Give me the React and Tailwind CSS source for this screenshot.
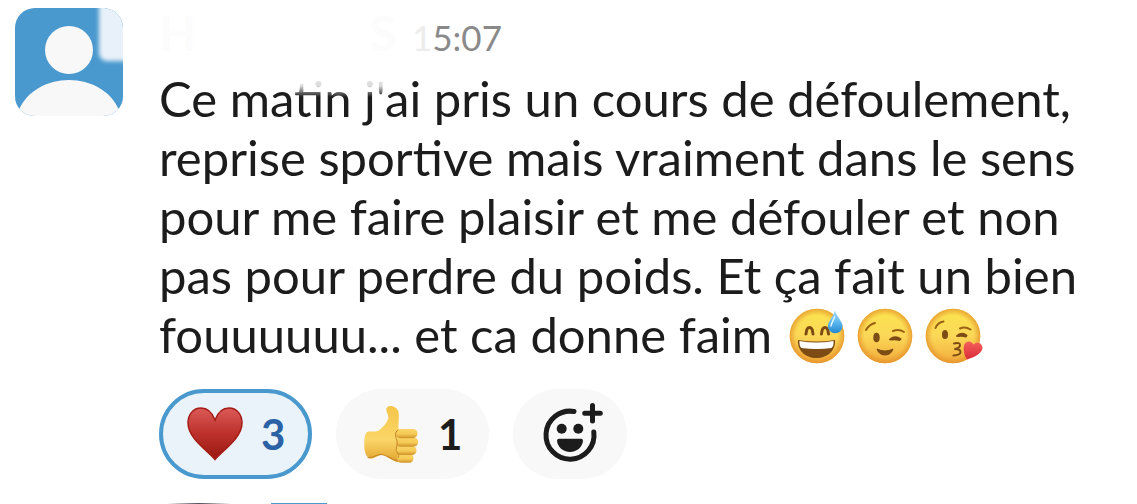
function Avatar() {
  return (
    <svg viewBox="0 0 108 108" className="w-[108px] h-[108px] shrink-0 rounded-[20px]" role="img" aria-label="Avatar">
      <defs>
        <filter id="soft" x="-30%" y="-30%" width="160%" height="160%">
          <feGaussianBlur stdDeviation="2" />
        </filter>
      </defs>
      <rect width="108" height="108" fill="#4998ce" />
      <rect x="84" y="-20" width="50" height="73" rx="8" fill="#e8f1f9" filter="url(#soft)" />
      <circle cx="54" cy="42" r="24" fill="#f8f8f8" />
      <path d="M0 108V102H4C12 83 32 72 54 72s42 11 50 30h4v6z" fill="#f8f8f8" />
      <path d="M0 90V104L4 100Q1 96 0 90zM108 90V104L104 100Q107 96 108 90z" fill="#4998ce" />
    </svg>
  );
}

/* Shared yellow face */
function Face({ label, id, children }) {
  return (
    <svg viewBox="0 0 56 56" className="w-14 h-14 overflow-visible" role="img" aria-label={label}>
      <defs>
        <linearGradient id={id} x1="0" y1="0" x2="0" y2="1">
          <stop offset="0" stopColor="#fbe44f" />
          <stop offset="0.5" stopColor="#fbd857" />
          <stop offset="1" stopColor="#f2ab3b" />
        </linearGradient>
        <radialGradient id={id + "-edge"}>
          <stop offset="0.75" stopColor="#e99a2c" stopOpacity="0" />
          <stop offset="1" stopColor="#e28d28" stopOpacity="0.75" />
        </radialGradient>
      </defs>
      <circle cx="28" cy="28" r="27.3" fill={`url(#${id})`} />
      <circle cx="28" cy="28" r="27.3" fill={`url(#${id}-edge)`} />
      {children}
    </svg>
  );
}

function SweatSmile() {
  return (
    <Face label="Sourire gêné" id="sweat">
      <defs>
        <linearGradient id="drop" x1="0" y1="0" x2="0" y2="1">
          <stop offset="0" stopColor="#a5daf6" />
          <stop offset="0.5" stopColor="#5db9ee" />
          <stop offset="1" stopColor="#2487d2" />
        </linearGradient>
      </defs>
      <path d="M17 26q.5-6.500 3.500-6.500t3.500 6.500M32.500 26q.5-6.500 3.500-6.500t3.500 6.500" fill="none" stroke="#7c4a12" strokeWidth="3" strokeLinecap="round" />
      <path d="M9 32q19 3 37 0c1 10-7 18-18.500 18S8 42 9 32z" fill="#7d4c14" />
      <path d="M10.500 33q17 3 34 0 .5 5-2 7-15 2-30 0-2.500-2-2-7z" fill="#fff" />
      <path d="M46 2.500c1.500 6 7.500 11 7.500 15.500a7.300 7.300 0 0 1-14.600 0C39 13.500 44.500 8.500 46 2.500z" fill="url(#drop)" />
      <path d="M45.500 9c-1 4-3.500 6-3.500 9" stroke="#e6f6fe" strokeWidth="1.500" strokeLinecap="round" fill="none" />
    </Face>
  );
}

function Wink() {
  return (
    <Face label="Clin d'œil" id="wink">
      <path d="M9 22q3-5.500 9-7M36 23q6-2.500 11 1" fill="none" stroke="#9a6115" strokeWidth="2" strokeLinecap="round" />
      <ellipse cx="19.500" cy="29.500" rx="3.200" ry="4.800" fill="#7d4c14" />
      <path d="M33 31.500q5-4 10.500-.5M34.500 31.500q4-.5 8 .5" fill="none" stroke="#7d4c14" strokeWidth="2" strokeLinecap="round" />
      <path d="M20 41q8 4 16 0-2 6-8 6t-8-6z" fill="#7d4c14" stroke="#7d4c14" strokeLinejoin="round" />
    </Face>
  );
}

function KissingHeart() {
  return (
    <Face label="Bisou" id="kiss">
      <defs>
        <linearGradient id="kiss-heart" x1="0" y1="0" x2="0" y2="1">
          <stop offset="0" stopColor="#f4605c" />
          <stop offset="1" stopColor="#da2c38" />
        </linearGradient>
      </defs>
      <path d="M10.500 20q2-5.500 8-6.500M35 20.500q5-2.500 10.500 1" fill="none" stroke="#9a6115" strokeWidth="2" strokeLinecap="round" />
      <ellipse cx="20" cy="26.500" rx="3" ry="4.600" fill="#7d4c14" />
      <path d="M32 28q5-4 9.500-.5M33.500 28q4-.5 7.500.5" fill="none" stroke="#7d4c14" strokeWidth="2" strokeLinecap="round" />
      <path d="M29 35.500q6-1.500 6 1.500t-5 4q5.500 0 5.500 3t-7 3.500" fill="none" stroke="#7d4c14" strokeWidth="2" strokeLinecap="round" strokeLinejoin="round" />
      <path d="M42 51.500c-3-4-4-10-3-14 1.500-5 7-5.500 9.500-1 4-3.500 8.500-1 9 3 .3 5-8 10-15.500 12z" fill="url(#kiss-heart)" />
    </Face>
  );
}

function Heart() {
  return (
    <svg viewBox="0 0 56 54" className="w-14 h-[54px]" aria-hidden="true">
      <defs>
        <linearGradient id="heart" x1="0" y1="0" x2="0" y2="1">
          <stop offset="0" stopColor="#db5a57" />
          <stop offset="0.5" stopColor="#bd302b" />
          <stop offset="1" stopColor="#981810" />
        </linearGradient>
      </defs>
      <path d="M28 52.500C20 43 1 31 1 16 1 7 6.500 1 14 1c6 0 11 4 14 12C31 5 36 1 42 1c7.500 0 13 6 13 15 0 15-19 27-27 36.500z" fill="url(#heart)" stroke="#a51d17" strokeWidth="1.500" />
    </svg>
  );
}

function ThumbsUp() {
  return (
    <svg viewBox="0 0 56 58" className="w-14 h-[58px]" aria-hidden="true">
      <defs>
        <linearGradient id="hand" x1="0" y1="0" x2="0" y2="1">
          <stop offset="0" stopColor="#f5c548" />
          <stop offset="0.6" stopColor="#fad668" />
          <stop offset="1" stopColor="#e3a430" />
        </linearGradient>
        <linearGradient id="finger" x1="0" y1="0" x2="0" y2="1">
          <stop offset="0" stopColor="#f9d566" />
          <stop offset="0.55" stopColor="#f6ca55" />
          <stop offset="1" stopColor="#cf922b" />
        </linearGradient>
      </defs>
      <path d="M3 27C6 25.500 11 27.500 15 25.500 19 22 23 18 24.300 13.500 25 10 21.500 6.500 22.500 3.500 24-.5 31.500.5 34 5.500c2 5 0 12 .5 19L40 26v30l-7 1C27 55 24 51 18 50c-4-.5-8 4.500-12 3.500C1.500 51.500.3 46 .3 39.500.3 33 1 29 3 27z" fill="url(#hand)" />
      <path d="M4 52.500c5 1 9-4 14-3 6 .8 9 5.500 17 6.500" fill="none" stroke="#c98a26" strokeWidth="1.200" strokeLinecap="round" />
      <g fill="url(#finger)">
        <rect x="33" y="49" width="16.500" height="8.700" rx="4.200" />
        <rect x="32" y="41" width="20.500" height="9" rx="4.500" />
        <rect x="31.500" y="32.500" width="22.700" height="9.200" rx="4.600" />
        <rect x="31.500" y="24" width="22" height="9.200" rx="4.600" />
      </g>
      <path d="M34 25q-3 1.500-2.500 5t1.500 6-.5 6 1 6 .5 5" fill="none" stroke="#c68a2a" strokeWidth="1" strokeLinecap="round" />
    </svg>
  );
}

function AddReactionIcon() {
  return (
    <svg viewBox="0 0 60 60" className="w-[60px] h-[60px] overflow-visible" fill="none" stroke="#1d1c1d" strokeWidth="5" strokeLinecap="round" aria-hidden="true">
      <path d="M34 7.500A24 24 0 1 0 53.800 28" />
      <path d="M52.500 1.500v15.500M44.700 9.200h15.600" />
      <circle cx="21.700" cy="24.700" r="5" fill="#1d1c1d" stroke="none" />
      <circle cx="38.300" cy="24.700" r="5" fill="#1d1c1d" stroke="none" />
      <path d="M19 34.800h22a2 2 0 0 1 2 2C42.500 43 37 48 30 48S17.500 43 17 36.800a2 2 0 0 1 2-2z" fill="#1d1c1d" stroke="none" />
    </svg>
  );
}

export default function App() {
  return (
    <div className="bg-white text-[#1d1c1d] font-['Lato',sans-serif] pl-[15px] pr-10 pt-2">
      <div className="flex gap-9">
        <Avatar />

        <div className="min-w-0 flex-1">
          {/* Author and time */}
          <div className="flex h-[61px] items-baseline gap-4">
            <div className="flex w-[237px] justify-between text-5xl font-bold leading-[50px] text-[#fcfcfc]">
              <span>H</span>
              <span>S</span>
            </div>
            <time className="text-[35px] leading-[50px] text-[#8a898a]">
              <span className="text-[#ececec]">1</span>5:07
            </time>
          </div>

          {/* Message */}
          <div className="relative">
            <p className="text-[49px] leading-[59px]">
              Ce matin j'ai pris un cours de défoulement, reprise sportive mais vraiment dans le sens pour me
              faire plaisir et me défouler et non pas pour perdre du poids. Et ça fait un bien fouuuuuu... et ca
              donne faim{" "}
              <span className="inline-flex h-14 gap-3 pl-1 align-[-11px]">
                <SweatSmile />
                <Wink />
                <KissingHeart />
              </span>
            </p>
            <div className="absolute left-[130px] top-0 h-7 w-[102px] bg-linear-to-b from-white/85 from-60% to-transparent" />
          </div>

          {/* Reactions */}
          <div className="mt-[25px] flex gap-6">
            <button className="flex h-[90px] w-[153px] items-center gap-[18px] rounded-full border-4 border-[#4998ce] bg-[#eaf3fa] pl-6 text-[42px] font-bold text-[#2b62a5]">
              <Heart />
              3
            </button>
            <button className="flex h-[90px] w-[153px] items-center gap-[18px] rounded-full bg-[#f8f8f8] pl-7 text-[42px] font-bold">
              <ThumbsUp />
              1
            </button>
            <button aria-label="Ajouter une réaction" className="flex h-[90px] w-[114px] items-center justify-center rounded-full bg-[#f8f8f8]">
              <AddReactionIcon />
            </button>
          </div>

          {/* Thread participants */}
          <div className="mt-6 flex h-px gap-10 overflow-hidden pl-2">
            <div className="h-16 w-16 shrink-0 bg-linear-to-r from-white via-[#55505a] to-white" />
            <div className="h-16 w-14 shrink-0 bg-[#4998ce]" />
          </div>
        </div>
      </div>
    </div>
  );
}
